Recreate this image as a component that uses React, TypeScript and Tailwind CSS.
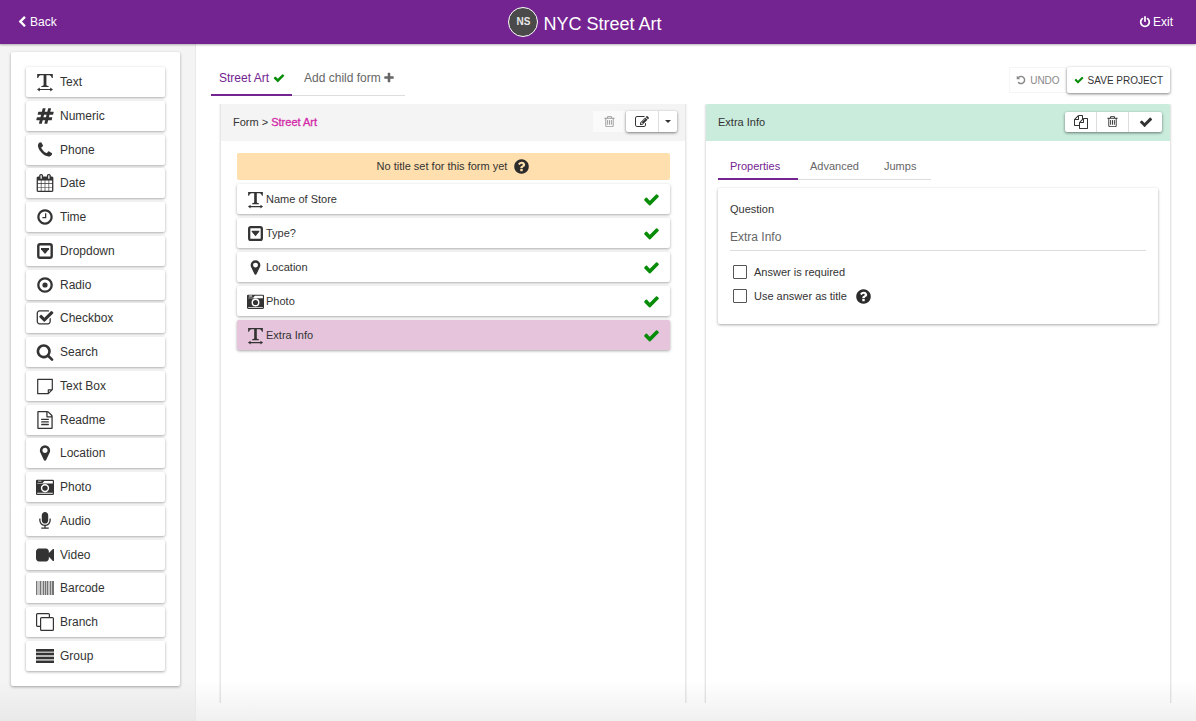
import React, { useState } from "react";

const ICONS = {
  hashtag:
    "M991 1024l64-256h-254l-64 256h254zm768-504l-56 224q-7 24-31 24h-327l-64 256h311q15 0 25 12 10 14 6 28l-56 224q-5 24-31 24h-327l-81 328q-7 24-31 24h-224q-16 0-26-12-9-12-6-28l78-312h-254l-81 328q-7 24-31 24h-225q-15 0-25-12-9-12-6-28l78-312h-311q-15 0-25-12-9-12-6-28l56-224q7-24 31-24h327l64-256h-311q-15 0-25-12-10-14-6-28l56-224q5-24 31-24h327l81-328q7-24 32-24h224q15 0 25 12 9 12 6 28l-78 312h254l81-328q7-24 32-24h224q15 0 25 12 9 12 6 28l-78 312h311q15 0 25 12 9 12 6 28z",
  phone:
    "M1600 1240q0 27-10 70.5t-21 68.5q-21 50-122 106-94 51-186 51-27 0-53-3.5t-57.5-12.5-47-14.5-55.5-20.5-49-18q-98-35-175-83-127-79-264-216t-216-264q-48-77-83-175-3-9-18-49t-20.5-55.5-14.5-47-12.5-57.5-3.5-53q0-92 51-186 56-101 106-122 25-11 68.5-21t70.5-10q14 0 21 3 18 6 53 76 11 19 30 54t35 63.5 31 53.5q3 4 17.5 25t21.5 35.5 7 28.5q0 20-28.5 50t-62 55-62 53-28.5 46q0 9 5 22.5t8.5 20.5 14 24 11.5 19q76 137 174 235t235 174q2 1 19 11.5t24 14 20.5 8.5 22.5 5q18 0 46-28.5t53-62 55-62 50-28.5q14 0 28.5 7t35.5 21.5 25 17.5q25 15 53.5 31t63.5 35 54 30q70 35 76 53 3 7 3 21z",
  calendar:
    "M192 1664h288v-288h-288v288zm352 0h320v-288h-320v288zm-352-352h288v-320h-288v320zm352 0h320v-320h-320v320zm-352-384h288v-288h-288v288zm736 736h320v-288h-320v288zm-384-736h320v-288h-320v288zm768 736h288v-288h-288v288zm-384-352h320v-320h-320v320zm-352-864v-288q0-13-9.5-22.5t-22.5-9.5h-64q-13 0-22.5 9.5t-9.5 22.5v288q0 13 9.5 22.5t22.5 9.5h64q13 0 22.5-9.5t9.5-22.5zm736 864h288v-320h-288v320zm-384-384h320v-288h-320v288zm384 0h288v-288h-288v288zm32-480v-288q0-13-9.5-22.5t-22.5-9.5h-64q-13 0-22.5 9.5t-9.5 22.5v288q0 13 9.5 22.5t22.5 9.5h64q13 0 22.5-9.5t9.5-22.5zm384-64v1280q0 52-38 90t-90 38h-1408q-52 0-90-38t-38-90v-1280q0-52 38-90t90-38h128v-96q0-66 47-113t113-47h64q66 0 113 47t47 113v96h384v-96q0-66 47-113t113-47h64q66 0 113 47t47 113v96h128q52 0 90 38t38 90z",
  clock:
    "M1024 544v448q0 14-9 23t-23 9h-320q-14 0-23-9t-9-23v-64q0-14 9-23t23-9h224v-352q0-14 9-23t23-9h64q14 0 23 9t9 23zm416 352q0-148-73-273t-198-198-273-73-273 73-198 198-73 273 73 273 198 198 273 73 273-73 198-198 73-273zm224 0q0 209-103 385.5t-279.5 279.5-385.5 103-385.5-103-279.5-279.5-103-385.5 103-385.5 279.5-279.5 385.5-103 385.5 103 279.5 279.5 103 385.5z",
  checkSquare:
    "M1472 930v318q0 119-84.5 203.5t-203.5 84.5h-832q-119 0-203.5-84.5t-84.5-203.5v-832q0-119 84.5-203.5t203.5-84.5h832q63 0 117 25 15 7 18 23 3 17-9 29l-49 49q-10 10-23 10-3 0-9-2-23-6-45-6h-832q-66 0-113 47t-47 113v832q0 66 47 113t113 47h832q66 0 113-47t47-113v-254q0-13 9-22l64-64q10-10 23-10 6 0 12 3 20 8 20 29zm231-489l-814 814q-24 24-57 24t-57-24l-430-430q-24-24-24-57t24-57l110-110q24-24 57-24t57 24l263 263 647-647q24-24 57-24t57 24l110 110q24 24 24 57t-24 57z",
  search:
    "M1216 832q0-185-131.5-316.5t-316.5-131.5-316.5 131.5-131.5 316.5 131.5 316.5 316.5 131.5 316.5-131.5 131.5-316.5zm512 832q0 52-38 90t-90 38q-54 0-90-38l-343-342q-179 124-399 124-143 0-273.5-55.5t-225-150-150-225-55.5-273.5 55.5-273.5 150-225 225-150 273.5-55.5 273.5 55.5 225 150 150 225 55.5 273.5q0 220-124 399l343 343q37 37 37 90z",
  file:
    "M1596 380q28 28 48 76t20 88v1152q0 40-28 68t-68 28h-1344q-40 0-68-28t-28-68v-1600q0-40 28-68t68-28h896q40 0 88 20t76 48zm-444-244v376h376q-10-29-22-41l-313-313q-12-12-41-22zm384 1528v-1024h-416q-40 0-68-28t-28-68v-416h-768v1536h1280zm-1024-864q0-14 9-23t23-9h704q14 0 23 9t9 23v64q0 14-9 23t-23 9h-704q-14 0-23-9t-9-23v-64zm736 224q14 0 23 9t9 23v64q0 14-9 23t-23 9h-704q-14 0-23-9t-9-23v-64q0-14 9-23t23-9h704zm0 256q14 0 23 9t9 23v64q0 14-9 23t-23 9h-704q-14 0-23-9t-9-23v-64q0-14 9-23t23-9h704z",
  marker:
    "M1152 640q0-106-75-181t-181-75-181 75-75 181 75 181 181 75 181-75 75-181zm256 0q0 109-33 179l-364 774q-16 33-47.5 52t-67.5 19-67.5-19-46.5-52l-365-774q-33-70-33-179 0-212 150-362t362-150 362 150 150 362z",
  mic:
    "M1472 704v128q0 221-147.5 384.5t-364.5 187.5v132h256q26 0 45 19t19 45-19 45-45 19h-640q-26 0-45-19t-19-45 19-45 45-19h256v-132q-217-24-364.5-187.5t-147.5-384.5v-128q0-26 19-45t45-19 45 19 19 45v128q0 185 131.5 316.5t316.5 131.5 316.5-131.5 131.5-316.5v-128q0-26 19-45t45-19 45 19 19 45zm-256-384v512q0 132-94 226t-226 94-226-94-94-226v-512q0-132 94-226t226-94 226 94 94 226z",
  video:
    "M1792 352v1088q0 42-39 59-13 5-25 5-27 0-45-19l-403-403v166q0 119-84.5 203.5t-203.5 84.5h-704q-119 0-203.5-84.5t-84.5-203.5v-704q0-119 84.5-203.5t203.5-84.5h704q119 0 203.5 84.5t84.5 203.5v165l403-402q18-19 45-19 12 0 25 5 39 17 39 59z",
  check:
    "M1671 566q0 40-28 68l-724 724-136 136q-28 28-68 28t-68-28l-136-136-362-362q-28-28-28-68t28-68l136-136q28-28 68-28t68 28l294 295 656-657q28-28 68-28t68 28l136 136q28 28 28 68z",
  chevronLeft:
    "M1427 301l-531 531 531 531q19 19 19 45t-19 45l-166 166q-19 19-45 19t-45-19l-742-742q-19-19-19-45t19-45l742-742q19-19 45-19t45 19l166 166q19 19 19 45t-19 45z",
  plus:
    "M1600 736v192q0 40-28 68t-68 28h-416v416q0 40-28 68t-68 28h-192q-40 0-68-28t-28-68v-416h-416q-40 0-68-28t-28-68v-192q0-40 28-68t68-28h416v-416q0-40 28-68t68-28h192q40 0 68 28t28 68v416h416q40 0 68 28t28 68z",
  power:
    "M1664 896q0 156-61 298t-164 245-245 164-298 61-298-61-245-164-164-245-61-298q0-182 80.5-343t226.5-270q43-32 95.5-25t83.5 50q32 42 24.5 94.5t-49.5 84.5q-98 74-151.5 181t-53.5 228q0 104 40.5 198.5t109.5 163.5 163.5 109.5 198.5 40.5 198.5-40.5 163.5-109.5 109.5-163.5 40.5-198.5q0-121-53.5-228t-151.5-181q-42-32-49.5-84.5t24.5-94.5q31-43 84-50t95 25q146 109 226.5 270t80.5 343zm-640-768v640q0 52-38 90t-90 38-90-38-38-90v-640q0-52 38-90t90-38 90 38 38 90z",
  undo:
    "M1664 896q0 156-61 298t-164 245-245 164-298 61q-172 0-327-72.5t-264-204.5q-7-10-6.5-22.5t8.5-20.5l137-138q10-9 25-9 16 2 23 12 73 95 179 147t225 52q104 0 198.5-40.5t163.5-109.5 109.5-163.5 40.5-198.5-40.5-198.5-109.5-163.5-163.5-109.5-198.5-40.5q-98 0-188 35.5t-160 101.5l137 138q31 30 14 69-17 40-59 40h-448q-26 0-45-19t-19-45v-448q0-42 40-59 39-17 69 14l130 129q107-101 244.5-156.5t284.5-55.5q156 0 298 61t245 164 164 245 61 298z",
  trash:
    "M704 736v576q0 14-9 23t-23 9h-64q-14 0-23-9t-9-23v-576q0-14 9-23t23-9h64q14 0 23 9t9 23zm256 0v576q0 14-9 23t-23 9h-64q-14 0-23-9t-9-23v-576q0-14 9-23t23-9h64q14 0 23 9t9 23zm256 0v576q0 14-9 23t-23 9h-64q-14 0-23-9t-9-23v-576q0-14 9-23t23-9h64q14 0 23 9t9 23zm128 724v-948h-896v948q0 22 7 40.5t14.5 27 10.5 8.5h832q3 0 10.5-8.5t14.5-27 7-40.5zm-672-1076h448l-48-117q-7-9-17-11h-317q-10 2-17 11zm928 32v64q0 14-9 23t-23 9h-96v948q0 83-47 143.5t-113 60.5h-832q-66 0-113-58.5t-47-141.5v-952h-96q-14 0-23-9t-9-23v-64q0-14 9-23t23-9h309l70-167q15-37 54-63t79-26h320q40 0 79 26t54 63l70 167h309q14 0 23 9t9 23z",
  edit:
    "M888 1184l116-116-152-152-116 116v56h96v96h56zm440-720q-16-16-33 1l-350 350q-17 17-1 33t33-1l350-350q17-17 1-33zm80 594v190q0 119-84.5 203.5t-203.5 84.5h-832q-119 0-203.5-84.5t-84.5-203.5v-832q0-119 84.5-203.5t203.5-84.5h832q63 0 117 25 15 7 18 23 3 17-9 29l-49 49q-14 14-32 8-23-6-45-6h-832q-66 0-113 47t-47 113v832q0 66 47 113t113 47h832q66 0 113-47t47-113v-126q0-13 9-22l64-64q15-15 35-7t20 29zm-96-738l288 288-672 672h-288v-288zm444 132l-92 92-288-288 92-92q28-28 68-28t68 28l152 152q28 28 28 68t-28 68z",
  copy:
    "M1696 384q40 0 68 28t28 68v1216q0 40-28 68t-68 28h-960q-40 0-68-28t-28-68v-288h-544q-40 0-68-28t-28-68v-672q0-40 20-88t48-76l408-408q28-28 76-48t88-20h416q40 0 68 28t28 68v328q68-40 128-40h416zm-544 213l-299 299h299v-299zm-640-384l-299 299h299v-299zm196 647l316-316v-416h-384v416q0 40-28 68t-68 28h-416v640h512v-256q0-40 20-88t48-76zm956 804v-1152h-384v416q0 40-28 68t-68 28h-416v640h896z",
  question:
    "M1024 1376v-192q0-14-9-23t-23-9h-192q-14 0-23 9t-9 23v192q0 14 9 23t23 9h192q14 0 23-9t9-23zm256-672q0-88-55.5-163t-138.5-116-170-41q-243 0-371 213-15 24 8 42l132 100q7 6 19 6 16 0 25-12 53-68 86-92 34-24 86-24 48 0 85.5 26t37.5 59q0 38-20 61t-68 45q-63 28-115.5 86.5t-52.5 125.5v36q0 14 9 23t23 9h192q14 0 23-9t9-23q0-19 21.5-49.5t54.5-49.5q32-18 49-28.5t46-35 44.5-48 28-60.5 12.5-81zm384 192q0 209-103 385.5t-279.5 279.5-385.5 103-385.5-103-279.5-279.5-103-385.5 103-385.5 279.5-279.5 385.5-103 385.5 103 279.5 279.5 103 385.5z",
} as const;

type GlyphName = keyof typeof ICONS;

function Glyph({ name, className = "" }: { name: GlyphName; className?: string }) {
  return (
    <svg viewBox="0 0 1792 1792" className={`shrink-0 overflow-visible fill-current ${className}`} aria-hidden="true">
      <path d={ICONS[name]} />
    </svg>
  );
}

type DrawnName = "text" | "dropdown" | "radio" | "note" | "camera" | "barcode" | "branch" | "group";

function Drawn({ name, className = "" }: { name: DrawnName; className?: string }) {
  return (
    <svg viewBox="0 0 18 18" className={`shrink-0 overflow-visible fill-current ${className}`} aria-hidden="true">
      {name === "text" && (
        <path d="M1.2 1H16.800V5H15.800Q15.300 2.300 13.500 2.300H10.400V12Q10.400 13 12.600 13.100V14H5.400V13.100Q7.600 13 7.600 12V2.300H4.500Q2.700 2.300 2.200 5H1.200ZM1 16.500L3.800 14.600V15.900H14.200V14.600L17 16.500L14.200 18.400V17.100H3.800V18.400Z" />
      )}
      {name === "dropdown" && (
        <>
          <rect x="2.300" y="2.300" width="13.400" height="13.400" rx="1.800" fill="none" stroke="currentColor" strokeWidth="2.400" />
          <path d="M5 6H13V7.200L9 12L5 7.200Z" />
        </>
      )}
      {name === "radio" && (
        <>
          <circle cx="9" cy="9" r="6.700" fill="none" stroke="currentColor" strokeWidth="2.300" />
          <circle cx="9" cy="9" r="2.600" />
        </>
      )}
      {name === "note" && (
        <path d="M1.700 1.800H16.300V12.200L12.300 16.200H1.700ZM16 12.300H12.300V16" transform="translate(0 .5)" fill="none" stroke="currentColor" strokeWidth="1.200" strokeLinejoin="round" />
      )}
      {name === "camera" && (
        <path
          fillRule="evenodd"
          d="M1.300 1.800H16.700Q18 1.800 18 3V15.700Q18 16.900 16.700 16.900H1.300Q0 16.900 0 15.700V3Q0 1.800 1.300 1.800ZM2 2.700V3.600H5.500V2.700ZM8.300 3L6.500 4.900H1.200V5.600H16.800V3ZM9 5.900A4.200 4.200 0 0 0 9 14.300A4.200 4.200 0 0 0 9 5.900ZM9 7.400A2.700 2.700 0 0 1 9 12.800A2.700 2.700 0 0 1 9 7.400ZM1.200 14.700V15.700H16.800V14.700Z"
        />
      )}
      {name === "barcode" && (
        <g>
          <path d="M0 2h18v14H0z" opacity=".28" />
          <path d="M0 2h1v14H0zM4 2h1v14H4zM7 2h1v14H7zM9 2h1v14H9zM11 2h1v14h-1zM14 2h1v14h-1zM16 2h2v14h-2z" opacity=".55" />
        </g>
      )}
      {name === "branch" && (
        <>
          <rect x="4.600" y="4.600" width="12.800" height="12.800" rx="1" fill="none" stroke="currentColor" strokeWidth="1.200" />
          <path d="M4.500 13.400H1.600Q.6 13.400 .6 12.400V1.600Q.6 .6 1.600 .6H12.400Q13.400 .6 13.400 1.600V4.400" fill="none" stroke="currentColor" strokeWidth="1.200" />
        </>
      )}
      {name === "group" && (
        <g>
          <path d="M0 2h18v14H0z" opacity=".35" />
          <path d="M0 2h18v2.400H0zM0 6h18v2H0zM0 10h18v2H0zM0 13.700h18v2.400H0z" />
        </g>
      )}
    </svg>
  );
}

type FieldIcon = { kind: "glyph"; name: GlyphName } | { kind: "drawn"; name: DrawnName };

function FieldGlyph({ icon, className }: { icon: FieldIcon; className: string }) {
  return icon.kind === "glyph" ? <Glyph name={icon.name} className={className} /> : <Drawn name={icon.name} className={className} />;
}

const g = (name: GlyphName): FieldIcon => ({ kind: "glyph", name });
const d = (name: DrawnName): FieldIcon => ({ kind: "drawn", name });

const PALETTE: { label: string; icon: FieldIcon }[] = [
  { label: "Text", icon: d("text") },
  { label: "Numeric", icon: g("hashtag") },
  { label: "Phone", icon: g("phone") },
  { label: "Date", icon: g("calendar") },
  { label: "Time", icon: g("clock") },
  { label: "Dropdown", icon: d("dropdown") },
  { label: "Radio", icon: d("radio") },
  { label: "Checkbox", icon: g("checkSquare") },
  { label: "Search", icon: g("search") },
  { label: "Text Box", icon: d("note") },
  { label: "Readme", icon: g("file") },
  { label: "Location", icon: g("marker") },
  { label: "Photo", icon: d("camera") },
  { label: "Audio", icon: g("mic") },
  { label: "Video", icon: g("video") },
  { label: "Barcode", icon: d("barcode") },
  { label: "Branch", icon: d("branch") },
  { label: "Group", icon: d("group") },
];

const QUESTIONS: { label: string; icon: FieldIcon }[] = [
  { label: "Name of Store", icon: d("text") },
  { label: "Type?", icon: d("dropdown") },
  { label: "Location", icon: g("marker") },
  { label: "Photo", icon: d("camera") },
  { label: "Extra Info", icon: d("text") },
];

function Option({ label, help }: { label: string; help?: boolean }) {
  return (
    <div className="flex h-6 items-center">
      <label className="flex items-center gap-[7px]">
        <input type="checkbox" className="size-[14px] appearance-none rounded-[1px] border border-[#555] bg-white checked:bg-[#732491]" />
        {label}
      </label>
      {help && <Glyph name="question" className="ml-2 size-[17px] text-[#2b2b2b]" />}
    </div>
  );
}

export default function App() {
  const [selected, setSelected] = useState("Extra Info");
  const [question, setQuestion] = useState("Extra Info");

  return (
    <div className="flex h-screen min-h-[721px] flex-col bg-white font-['Liberation_Sans',Arial,sans-serif] text-[11px] text-[#333]">
      <header className="z-10 grid h-11 shrink-0 grid-cols-3 items-center bg-[#732491] text-white shadow-[0_1px_2px_rgba(0,0,0,0.3)]">
        <a href="#back" className="ml-4 flex items-center gap-0.5 text-xs">
          <Glyph name="chevronLeft" className="size-3" />
          Back
        </a>
        <h1 className="flex items-center justify-center gap-[5px] pr-[26px] text-lg leading-6">
          <span className="flex size-[30px] items-center justify-center rounded-full border border-white bg-[#4a4a4a] text-[10px] font-bold text-[#e8e8e8]">NS</span>
          <span className="pt-1">NYC Street Art</span>
        </h1>
        <a href="#exit" className="mr-[23px] flex items-center gap-0.5 justify-self-end text-xs">
          <Glyph name="power" className="size-3" />
          Exit
        </a>
      </header>

      <div className="flex min-h-0 flex-1">
        <aside className="flex w-[196px] shrink-0 flex-col border-r border-[#e9e9e9] bg-linear-to-b from-[#f4f4f4] from-94% to-[#e9e9e9] pt-2 pr-[15px] pb-[35px] pl-[11px]">
          <nav aria-label="Question types" className="flex flex-1 flex-col justify-between rounded-xs bg-white p-[15px] shadow-[0_1px_3px_rgba(0,0,0,0.35)]">
            {PALETTE.map((item) => (
              <button key={item.label} className="flex h-[30px] items-center gap-1.5 rounded-xs bg-white px-2.5 text-left text-xs shadow-[0_1px_3px_rgba(0,0,0,0.35)]">
                <FieldGlyph icon={item.icon} className="size-[18px]" />
                {item.label}
              </button>
            ))}
          </nav>
        </aside>

        <main className="flex min-w-0 flex-1 flex-col bg-linear-to-b from-white from-94% to-[#f0f0f0] pt-4 pr-[26px] pb-[18px] pl-[15px]">
          <div className="flex items-start justify-between">
            <div role="tablist" aria-label="Forms" className="flex text-xs text-[#666]">
              <button role="tab" aria-selected="true" className="flex h-9 items-center gap-1 border-b-2 border-[#732491] pt-0.5 pr-[7px] pl-2 text-[#732491]">
                Street Art
                <Glyph name="check" className="size-3 text-[#078c07]" />
              </button>
              <button role="tab" aria-selected="false" className="flex h-9 items-center gap-0.5 border-b border-[#ddd] pt-px pr-2.5 pl-3">
                Add child form
                <Glyph name="plus" className="size-3" />
              </button>
            </div>
            <div className="mt-[7px] flex h-[26px] text-[10px]">
              <button disabled className="flex items-center gap-1 border border-[#f6f6f6] px-1.5 text-[#888]">
                <Glyph name="undo" className="size-[10px]" />
                UNDO
              </button>
              <button className="flex items-center gap-1 rounded-xs bg-white px-[7px] shadow-[0_1px_3px_rgba(0,0,0,0.5)]">
                <Glyph name="check" className="size-[10px] text-[#078c07]" />
                SAVE PROJECT
              </button>
            </div>
          </div>

          <div className="mt-2 grid flex-1 grid-cols-2 gap-[21px] pl-2.5">
            <section className="shadow-[0_0_2px_1px_rgba(0,0,0,0.14)] [clip-path:inset(0_-4px_0_-4px)]">
              <div className="flex h-[37px] items-center justify-between bg-[#f4f4f4] pr-2 pl-3">
                <h2>
                  Form &gt; <span className="text-[#d328a8] [-webkit-text-stroke:0.3px_#d328a8]">Street Art</span>
                </h2>
                <div className="mb-0.5 flex h-[21px]">
                  <button disabled aria-label="Delete form" className="flex w-8 items-center justify-center bg-[#fafafa] text-[#999]">
                    <Glyph name="trash" className="size-[13px]" />
                  </button>
                  <div className="ml-px flex rounded-xs bg-white shadow-[0_1px_3px_rgba(0,0,0,0.5)]">
                    <button aria-label="Edit form" className="flex w-8 items-center justify-center">
                      <Glyph name="edit" className="size-[14px]" />
                    </button>
                    <button aria-label="More actions" className="flex w-[19px] items-center justify-center border-l border-[#ddd]">
                      <svg viewBox="0 0 6 3" className="h-[3px] w-1.5 fill-current">
                        <path d="M0 0h6L3 3z" />
                      </svg>
                    </button>
                  </div>
                </div>
              </div>
              <div className="flex flex-col gap-1 py-3 pr-[15px] pl-4">
                <p className="flex h-[27px] items-center justify-center gap-1.5 rounded-xs bg-[#fedfad]">
                  No title set for this form yet
                  <Glyph name="question" className="size-[17px] text-[#2b2b2b]" />
                </p>
                {QUESTIONS.map((q) => (
                  <button
                    key={q.label}
                    onClick={() => setSelected(q.label)}
                    className={`flex h-[30px] items-center gap-0.5 rounded-xs px-2.5 text-left shadow-[0_1px_3px_rgba(0,0,0,0.35)] ${selected === q.label ? "bg-[#e5c4dc]" : "bg-white"}`}
                  >
                    <FieldGlyph icon={q.icon} className="size-[17px]" />
                    <span className="flex-1">{q.label}</span>
                    <Glyph name="check" className="size-[17px] text-[#078c07]" />
                  </button>
                ))}
              </div>
            </section>

            <section className="rounded-t-xs shadow-[0_0_2px_1px_rgba(0,0,0,0.14)] [clip-path:inset(0_-4px_0_-4px)]">
              <div className="flex h-[37px] items-center justify-between rounded-t-xs bg-[#c9ecdc] pr-2 pl-3">
                <h2>Extra Info</h2>
                <div className="mb-0.5 flex h-5 divide-x divide-[#ddd] rounded-xs bg-white shadow-[0_1px_3px_rgba(0,0,0,0.5)]">
                  <button aria-label="Duplicate question" className="flex w-8 items-center justify-center">
                    <Glyph name="copy" className="size-[14px]" />
                  </button>
                  <button aria-label="Delete question" className="flex w-8 items-center justify-center">
                    <Glyph name="trash" className="size-[13px]" />
                  </button>
                  <button aria-label="Confirm question" className="flex w-[33px] items-center justify-center">
                    <Glyph name="check" className="size-[14px]" />
                  </button>
                </div>
              </div>
              <div className="px-3 pt-[11px]">
                <div role="tablist" aria-label="Question settings" className="flex text-left text-[#666]">
                  <button role="tab" aria-selected="true" className="h-7 w-20 border-b-2 border-[#732491] pt-0.5 pl-3 text-left text-[#732491]">Properties</button>
                  <button role="tab" aria-selected="false" className="h-7 w-[74px] border-b border-[#ddd] pt-px pl-3 text-left">Advanced</button>
                  <button role="tab" aria-selected="false" className="h-7 w-[59px] border-b border-[#ddd] pt-px pl-3 text-left">Jumps</button>
                </div>
                <div className="mt-2 rounded-xs px-3 pt-[13px] pb-4 shadow-[0_1px_3px_rgba(0,0,0,0.35)]">
                  <label htmlFor="question" className="block leading-4">Question</label>
                  <input
                    id="question"
                    value={question}
                    onChange={(e) => setQuestion(e.target.value)}
                    className="mt-[7px] mb-[9px] block h-[27px] w-full border-b border-[#ddd] text-xs text-[#666] outline-none"
                  />
                  <div className="pl-[3px]">
                    <Option label="Answer is required" />
                    <Option label="Use answer as title" help />
                  </div>
                </div>
              </div>
            </section>
          </div>
        </main>
      </div>
    </div>
  );
}
